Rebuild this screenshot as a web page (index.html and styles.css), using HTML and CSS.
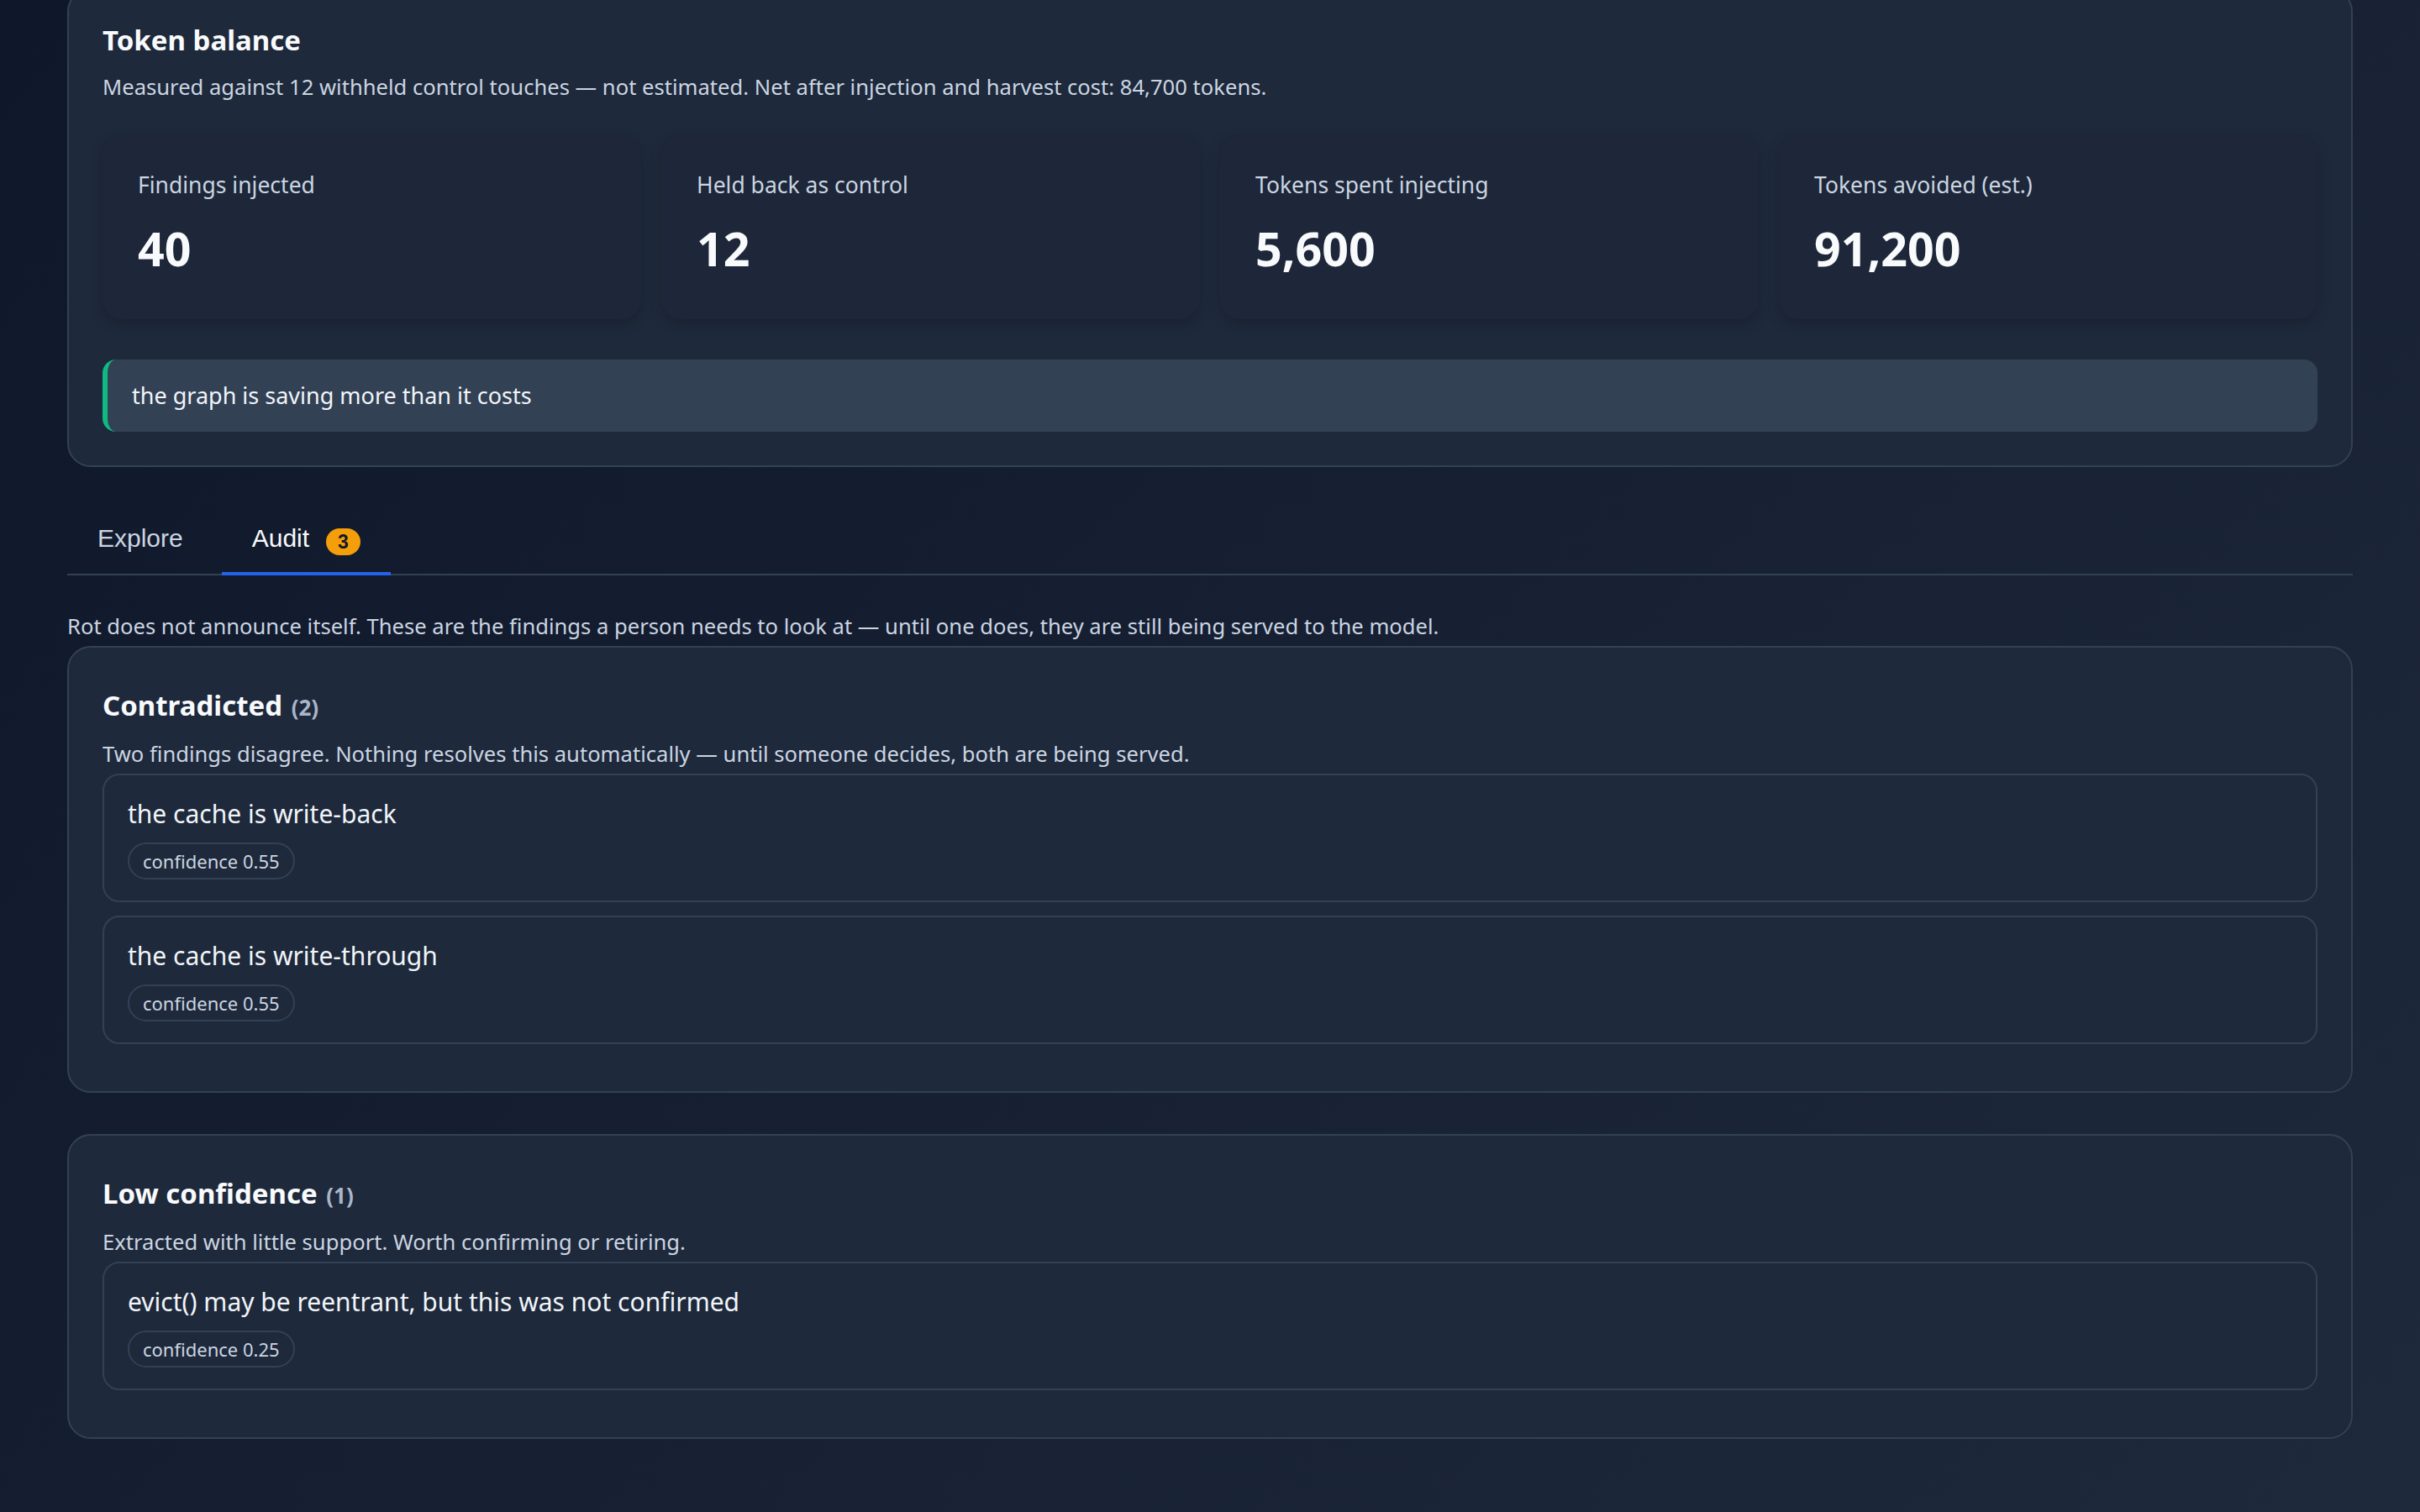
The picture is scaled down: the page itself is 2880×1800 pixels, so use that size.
FILE: index.html
```html
<!DOCTYPE html>
<html lang="en">
  <head>
    <meta charset="UTF-8" />
    <meta name="viewport" content="width=device-width, initial-scale=1.0" />
    <title>Knowledge graph - Audit</title>
    <link rel="stylesheet" href="styles.css">
  </head>
  <body>
    <main class="page">
      <section class="panel balance">
        <h2 class="panel-title">Token balance</h2>
        <p class="panel-sub">
          Measured against 12 withheld control touches — not estimated. Net after injection and harvest cost: 84,700 tokens.
        </p>
        <div class="stats">
          <div class="stat">
            <div class="stat-label">Findings injected</div>
            <div class="stat-value">40</div>
          </div>
          <div class="stat">
            <div class="stat-label">Held back as control</div>
            <div class="stat-value">12</div>
          </div>
          <div class="stat">
            <div class="stat-label">Tokens spent injecting</div>
            <div class="stat-value">5,600</div>
          </div>
          <div class="stat">
            <div class="stat-label">Tokens avoided (est.)</div>
            <div class="stat-value">91,200</div>
          </div>
        </div>
        <div class="verdict">the graph is saving more than it costs</div>
      </section>

      <nav class="tabs">
        <button class="tab">Explore</button>
        <button class="tab active">Audit <span class="tab-badge">3</span></button>
      </nav>

      <div class="tab-panel">
        <p class="audit-intro">
          Rot does not announce itself. These are the findings a person needs to look at — until one does, they are still being served to the model.
        </p>

        <section class="panel group">
          <h3>Contradicted <span class="count">(2)</span></h3>
          <p class="group-desc">
            Two findings disagree. Nothing resolves this automatically — until someone decides, both are being served.
          </p>
          <div class="finding">
            <div class="finding-text">the cache is write-back</div>
            <span class="pill">confidence 0.55</span>
          </div>
          <div class="finding">
            <div class="finding-text">the cache is write-through</div>
            <span class="pill">confidence 0.55</span>
          </div>
        </section>

        <section class="panel group">
          <h3>Low confidence <span class="count">(1)</span></h3>
          <p class="group-desc">Extracted with little support. Worth confirming or retiring.</p>
          <div class="finding">
            <div class="finding-text">evict() may be reentrant, but this was not confirmed</div>
            <span class="pill">confidence 0.25</span>
          </div>
        </section>
      </div>
    </main>
  </body>
</html>
```

FILE: styles.css
```css
:root {
  --bg-dark: #0f172a;
  --bg-light: #1e293b;
  --surface: #1e293b;
  --surface-raised: #334155;
  --border: #334155;
  --text: #f8fafc;
  --text-soft: #cbd5e1;
  --text-muted: #aab6c8;
  --accent: #2563eb;
  --good: #10b981;
  --warn: #f59e0b;
}
html {
  font-size: 16px;
}
body {
  margin: 0;
  min-height: 100vh;
  background: linear-gradient(135deg, var(--bg-dark) 0%, var(--bg-light) 100%);
  background-attachment: fixed;
  color: var(--text);
  font-family: "Noto Sans", system-ui, sans-serif;
  -webkit-font-smoothing: antialiased;
}
.page {
  padding: 0 80px 80px;
}

/* cards */
.panel {
  background-color: var(--surface);
  border: 2px solid var(--border);
  border-radius: 28px;
  padding: 40px;
}
.balance {
  margin-top: -14px;
}
.panel-title {
  margin: 0;
  font-size: 33px;
  line-height: 40px;
  font-weight: 700;
  color: var(--text);
}
.panel-sub {
  margin: 18px 0 0;
  font-size: 25.6px;
  line-height: 36px;
  color: var(--text-soft);
}

/* stat tiles */
.stats {
  display: grid;
  grid-template-columns: repeat(4, 1fr);
  gap: 24px;
  margin: 38px 0 48px;
}
.stat {
  background-color: #1d2739;
  border-radius: 24px;
  padding: 42px 42px 52px;
  box-shadow: 0 6px 16px rgba(0, 0, 0, 0.18);
}
.stat-label {
  font-size: 26.5px;
  line-height: 36px;
  color: var(--text-soft);
}
.stat-value {
  margin-top: 26px;
  font-size: 55.5px;
  line-height: 64px;
  font-weight: 700;
  color: var(--text);
}
.verdict {
  background-color: var(--surface-raised);
  border-left: 6px solid var(--good);
  border-radius: 16px;
  padding: 24px 29px;
  font-size: 27px;
  line-height: 38px;
  color: #f1f5f9;
}

/* tabs */
.tabs {
  display: flex;
  gap: 10px;
  margin-top: 47px;
  border-bottom: 2px solid var(--border);
}
.tab {
  display: inline-flex;
  align-items: center;
  gap: 20px;
  margin-bottom: -2px;
  padding: 18px 36px 20px;
  background: none;
  border: none;
  border-bottom: 4px solid transparent;
  font-family: "Liberation Sans", Arial, sans-serif;
  font-size: 30px;
  line-height: 36px;
  color: var(--text-soft);
  cursor: pointer;
}
.tab.active {
  color: var(--text);
  border-bottom-color: var(--accent);
}
.tab-badge {
  margin-top: 8px;
  padding: 2px 14px;
  border-radius: 999px;
  background-color: var(--warn);
  color: #111827;
  font-size: 23px;
  line-height: 28px;
  font-weight: 700;
}

/* audit list */
.tab-panel {
  padding-top: 43px;
}
.audit-intro {
  margin: 0 0 5px;
  font-size: 25.6px;
  line-height: 36px;
  color: var(--text-soft);
}
.group {
  margin-bottom: 49px;
}
.group h3 {
  margin: 9px 0 0;
  font-size: 33px;
  line-height: 40px;
  font-weight: 700;
  color: var(--text);
}
.count {
  margin-left: 2px;
  font-size: 26px;
  font-weight: 700;
  color: var(--text-muted);
}
.group-desc {
  margin: 18px 0 5px;
  font-size: 25.6px;
  line-height: 36px;
  color: var(--text-soft);
}
.finding {
  display: flex;
  flex-direction: column;
  align-items: flex-start;
  margin-bottom: 16px;
  padding: 26px 28px 25px;
  border: 2px solid var(--border);
  border-radius: 20px;
}
.finding-text {
  font-size: 30px;
  line-height: 40px;
  color: #f1f5f9;
}
.pill {
  margin-top: 14px;
  padding: 6px 16px;
  border: 2px solid var(--border);
  border-radius: 999px;
  font-size: 22px;
  line-height: 28px;
  color: var(--text-soft);
}
```
